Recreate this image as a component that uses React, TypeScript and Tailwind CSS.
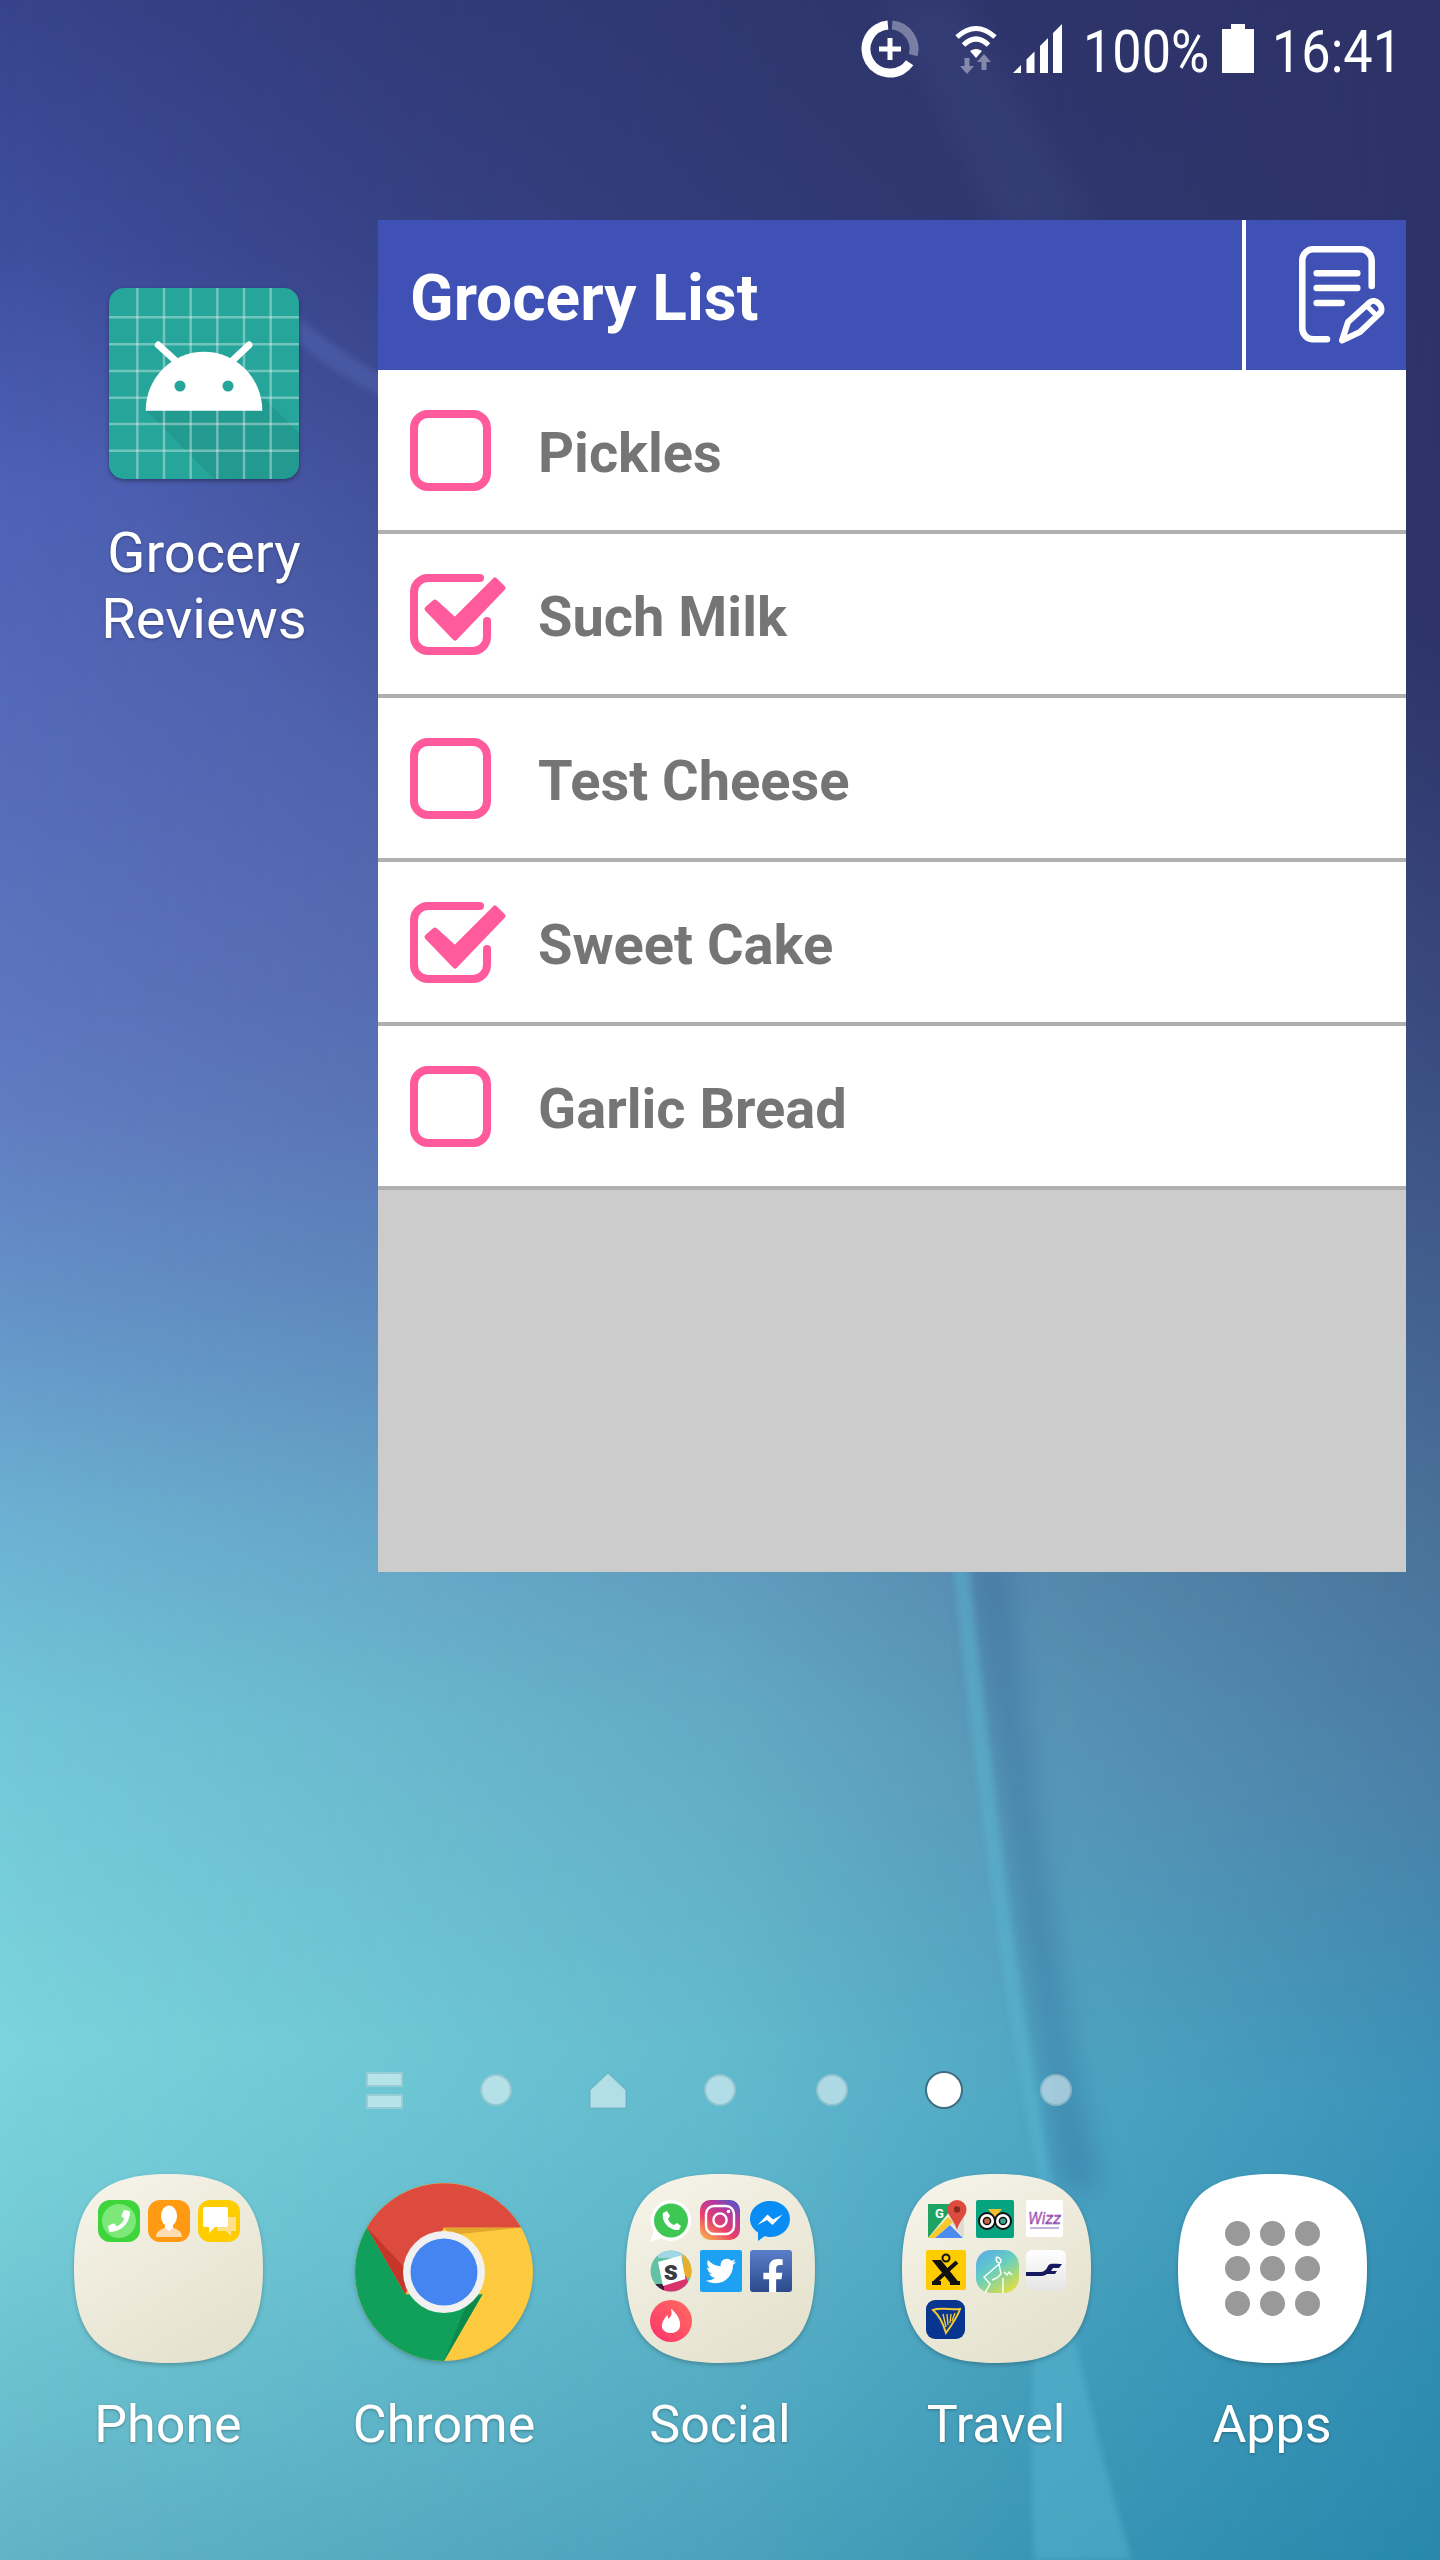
import type { ReactNode } from "react";
import { FaFacebookF, FaPhoneAlt, FaTwitter } from "react-icons/fa";
import { SiTinder } from "react-icons/si";

const groceries = [
  { name: "Pickles", checked: false },
  { name: "Such Milk", checked: true },
  { name: "Test Cheese", checked: false },
  { name: "Sweet Cake", checked: true },
  { name: "Garlic Bread", checked: false },
];

function Wallpaper() {
  return (
    <svg className="absolute inset-0 w-[1440px] h-[2560px]" viewBox="0 0 1440 2560">
      <defs>
        <linearGradient id="wallLeft" x1="0" y1="0" x2="0" y2="1">
          <stop offset="0" stopColor="#37448c" />
          <stop offset="0.1" stopColor="#3f4fa0" />
          <stop offset="0.19" stopColor="#4e61b6" />
          <stop offset="0.39" stopColor="#5d75be" />
          <stop offset="0.44" stopColor="#617ec2" />
          <stop offset="0.51" stopColor="#6593c8" />
          <stop offset="0.59" stopColor="#6cb0d2" />
          <stop offset="0.67" stopColor="#72c6d8" />
          <stop offset="0.8" stopColor="#7bd5dc" />
          <stop offset="0.88" stopColor="#74cbd6" />
          <stop offset="1" stopColor="#62b3c6" />
        </linearGradient>
        <linearGradient id="wallRight" x1="0" y1="0" x2="0" y2="1">
          <stop offset="0" stopColor="#2c3165" />
          <stop offset="0.25" stopColor="#2e3468" />
          <stop offset="0.4" stopColor="#394a80" />
          <stop offset="0.6" stopColor="#4a7299" />
          <stop offset="0.7" stopColor="#4a80a8" />
          <stop offset="0.82" stopColor="#3a92b8" />
          <stop offset="1" stopColor="#2788ac" />
        </linearGradient>
        <linearGradient id="wallFade" gradientUnits="userSpaceOnUse" x1="0" y1="0" x2="1440" y2="0">
          <stop offset="0" stopColor="#000" />
          <stop offset="0.25" stopColor="#2e2e2e" />
          <stop offset="0.5" stopColor="#616161" />
          <stop offset="0.75" stopColor="#b8b8b8" />
          <stop offset="1" stopColor="#fff" />
        </linearGradient>
        <radialGradient id="wallTop" gradientUnits="userSpaceOnUse" cx="1000" cy="0" r="1000">
          <stop offset="0" stopColor="#2d3367" stopOpacity="0.7" />
          <stop offset="0.6" stopColor="#2d3367" stopOpacity="0.35" />
          <stop offset="1" stopColor="#2d3367" stopOpacity="0" />
        </radialGradient>
        <mask id="wallMask">
          <rect width="1440" height="2560" fill="url(#wallFade)" />
        </mask>
        <filter id="soft" x="-30%" y="-30%" width="160%" height="160%">
          <feGaussianBlur stdDeviation="14" />
        </filter>
        <filter id="softer" x="-30%" y="-30%" width="160%" height="160%">
          <feGaussianBlur stdDeviation="3" />
        </filter>
      </defs>
      <rect width="1440" height="2560" fill="url(#wallLeft)" />
      <rect width="1440" height="2560" fill="url(#wallRight)" mask="url(#wallMask)" />
      <rect width="1440" height="1000" fill="url(#wallTop)" />
      <path d="M968 1560 C1000 1780 1030 2000 1060 2190 L1100 2190 C1060 2000 1030 1780 1010 1560 Z" fill="#2f5f96" opacity="0.35" filter="url(#soft)" />
      <path d="M952 1560 C970 1720 990 1900 1015 2050 L1040 2190 C1032 2320 1030 2460 1034 2560 L1132 2560 C1105 2470 1090 2410 1078 2350 C1060 2240 1045 2140 1030 2050 C1006 1900 986 1720 968 1560 Z" fill="#5cbad6" opacity="0.45" filter="url(#softer)" />
      <path d="M290 335 C325 368 360 386 400 406 L400 384 C360 364 325 340 290 310 Z" fill="#6a82d4" opacity="0.24" filter="url(#softer)" />
      <path d="M880 0 L1000 230 L1100 230 L960 0 Z" fill="#5a6aa8" opacity="0.12" filter="url(#soft)" />
    </svg>
  );
}

function StatusBar() {
  return (
    <div className="relative flex h-[100px] shrink-0 items-start justify-end pt-[19px] pr-[46px] text-white" style={{ fontFamily: "Roboto, sans-serif" }}>
      <svg width="60" height="60" viewBox="0 0 60 60">
        <path d="M49.66 43.77 A24 24 0 1 1 27.9 6.1" fill="none" stroke="#fff" strokeWidth="9" />
        <path d="M32.1 6.1 A24 24 0 0 1 53.18 36.2" fill="none" stroke="#fff" strokeOpacity="0.35" strokeWidth="9" />
        <path d="M30 19 V41 M19 30 H41" stroke="#fff" strokeWidth="5" />
      </svg>
      <svg className="ml-[34px] mt-[5px]" width="44" height="50" viewBox="0 0 44 50">
        <path d="M3 13 Q22 -4 41 13" fill="none" stroke="#fff" strokeWidth="5" />
        <path d="M9.5 21 Q22 9 34.5 21" fill="none" stroke="#fff" strokeWidth="5" />
        <path d="M16 27 Q22 23 28 27 L22 34 Z" fill="#fff" />
        <path d="M10.5 34 H15.5 V42 H20 L13 50 L6 42 H10.5 Z M27.5 46 H32.5 V38 H37 L30 30 L23 38 H27.5 Z" fill="#fff" fillOpacity="0.4" />
      </svg>
      <svg className="ml-[15px] mt-[5px]" width="49" height="49" viewBox="0 0 49 49">
        <path d="M0 49 L8 41 V49 Z M13.5 49 V35.5 L21.5 27.5 V49 Z M27 49 V22 L35 14 V49 Z M40 49 V9 L49 0 V49 Z" fill="#fff" />
      </svg>
      <div className="ml-[21px] mt-[3px] w-[125px] whitespace-nowrap text-[60px] leading-[60px] font-normal origin-left scale-x-[0.87]">100%</div>
      <svg className="ml-[14px] mt-[5px]" width="32" height="49" viewBox="0 0 32 49">
        <path d="M9 0 H23 V5 H32 V49 H0 V5 H9 Z" fill="#fff" />
      </svg>
      <div className="ml-[18px] mt-[3px] w-[122px] whitespace-nowrap text-[60px] leading-[60px] font-normal origin-left scale-x-[0.87]">16:41</div>
    </div>
  );
}

function AndroidIcon() {
  const vertical = [28.3, 55, 81.7, 108.3, 135, 161.7];
  const horizontal = [29.3, 56.3, 83, 109.7, 136, 162.7];
  return (
    <svg className="drop-shadow-[0_2px_2px_rgba(0,0,0,0.35)]" width="190" height="191" viewBox="0 0 190 191">
      <defs>
        <clipPath id="androidClip">
          <rect width="190" height="191" rx="15" />
        </clipPath>
      </defs>
      <g clipPath="url(#androidClip)">
        <rect width="190" height="191" fill="#26a69a" />
        <path d="M36.7 122 L105 191 H190 V145 L153 108 Z" fill="#000" fillOpacity="0.07" />
        {vertical.map((x) => (
          <line key={x} x1={x} x2={x} y1="0" y2="191" stroke="#fff" strokeOpacity="0.35" strokeWidth="2.5" />
        ))}
        {horizontal.map((y) => (
          <line key={y} y1={y} y2={y} x1="0" x2="190" stroke="#fff" strokeOpacity="0.35" strokeWidth="2.5" />
        ))}
      </g>
      <path d="M49.3 57 L68 74 M140 57 L122 74" stroke="#fff" strokeWidth="7" strokeLinecap="round" />
      <path d="M36.7 122.7 A58.3 59 0 0 1 153.3 122.7 Z" fill="#fff" />
      <circle cx="71" cy="98" r="5.5" fill="#26a69a" />
      <circle cx="119" cy="98" r="5.5" fill="#26a69a" />
    </svg>
  );
}

function CheckBox({ checked }: { checked: boolean }) {
  if (!checked) {
    return <div className="h-[81px] w-[81px] shrink-0 rounded-[18px] border-[8px] border-[#ff5a9b]" />;
  }
  return (
    <svg className="shrink-0 overflow-visible" width="81" height="81" viewBox="0 0 81 81">
      <path d="M70 4 H18 A14 14 0 0 0 4 18 V63 A14 14 0 0 0 18 77 H63 A14 14 0 0 0 77 63 V47" fill="none" stroke="#ff5a9b" strokeWidth="8" strokeLinecap="round" />
      <path d="M17 35 L25 28 L45 46 L85 6 L93 14 L45 64 Z" fill="#ff5a9b" stroke="#ff5a9b" strokeWidth="5" strokeLinejoin="round" />
    </svg>
  );
}

function NoteIcon() {
  return (
    <svg width="92" height="100" viewBox="0 0 92 100" fill="none" stroke="#fff" strokeWidth="6.5" strokeLinecap="round" strokeLinejoin="round">
      <path d="M75.7 40 V15 A11.5 11.5 0 0 0 64 3.3 H17 A11 11 0 0 0 6.3 14 V82 A11 11 0 0 0 17.3 93.3 H31" />
      <path d="M20.7 27.3 H61.3 M20.7 42 H61.3 M20.7 57 H45.7" />
      <path d="M46 94.5 L52 76 L74 56 C79 52 88 60 85 66 L64 86 Z" strokeWidth="6" />
      <path d="M71 60 L81 70" strokeWidth="5" />
    </svg>
  );
}

function GroceryWidget() {
  return (
    <div className="flex h-[1352px] w-[1028px] flex-col bg-[#cccccc]" style={{ fontFamily: "Roboto, sans-serif" }}>
      <div className="flex h-[150px] shrink-0 bg-[#3f51b5]">
        <div className="flex w-[864px] items-center pl-[32px] pt-[7px] text-[64px] font-bold text-white">Grocery List</div>
        <div className="flex flex-1 items-center justify-center border-l-4 border-white pl-[31px] pt-[2px]">
          <NoteIcon />
        </div>
      </div>
      {groceries.map((item) => (
        <div key={item.name} className="flex h-[164px] shrink-0 items-center gap-[47px] border-b-4 border-[#b0b0b0] bg-white pl-[32px]">
          <CheckBox checked={item.checked} />
          <span className="pt-[6px] text-[56px] font-bold text-[#757575]">{item.name}</span>
        </div>
      ))}
    </div>
  );
}

function PageDots() {
  const dot = "h-[32px] w-[32px] rounded-full border-2 border-[#4d8a9c]/30 bg-white/50";
  return (
    <div className="relative mt-auto flex h-[36px] items-center justify-center">
      <div className="flex w-[112px] justify-center">
        <div className="flex flex-col gap-[7px]">
          <div className="h-[15px] w-[37px] border-2 border-[#4d9aa8]/30 bg-white/50" />
          <div className="h-[15px] w-[37px] border-2 border-[#4d9aa8]/30 bg-white/50" />
        </div>
      </div>
      <div className="flex w-[112px] justify-center">
        <div className={dot} />
      </div>
      <div className="flex w-[112px] justify-center">
        <svg width="38" height="37" viewBox="0 0 38 37">
          <path d="M19 1 L37 18 V36 H1 V18 Z" fill="#fff" fillOpacity="0.5" stroke="#4d9aa8" strokeOpacity="0.35" strokeWidth="1.5" />
        </svg>
      </div>
      <div className="flex w-[112px] justify-center">
        <div className={dot} />
      </div>
      <div className="flex w-[112px] justify-center">
        <div className={dot} />
      </div>
      <div className="flex w-[112px] justify-center">
        <div className="h-[38px] w-[38px] rounded-full border-2 border-[#3f6f82] bg-white" />
      </div>
      <div className="flex w-[112px] justify-center">
        <div className={dot} />
      </div>
    </div>
  );
}

function Squircle({ fill }: { fill: string }) {
  return (
    <svg className="absolute inset-0 drop-shadow-[0_2px_2px_rgba(0,0,0,0.22)]" width="189" height="189" viewBox="0 0 189 189">
      <defs>
        <linearGradient id="folderFill" x1="0" y1="0" x2="0.6" y2="1">
          <stop offset="0" stopColor="#f7f5ea" />
          <stop offset="1" stopColor="#e5e2cf" />
        </linearGradient>
      </defs>
      <path d="M94.5 0 C163 0 189 26 189 94.5 C189 163 163 189 94.5 189 C26 189 0 163 0 94.5 C0 26 26 0 94.5 0 Z" fill={fill} />
    </svg>
  );
}

function Folder({ children }: { children: ReactNode }) {
  return (
    <div className="relative h-[189px] w-[189px]">
      <Squircle fill="url(#folderFill)" />
      <div className="absolute inset-0 grid grid-cols-[repeat(3,42px)] auto-rows-[42px] content-start gap-[8px] pt-[26px] pl-[24px]">{children}</div>
    </div>
  );
}

function Mini({ className, children }: { className: string; children?: ReactNode }) {
  return <div className={`flex h-[42px] w-[42px] items-center justify-center overflow-hidden text-white ${className}`}>{children}</div>;
}

function WhatsappMini() {
  return (
    <svg width="42" height="42" viewBox="0 0 42 42" className="overflow-visible">
      <path d="M21 0 A20.5 20.5 0 1 1 11 38.5 L0 42 L3.5 31 A20.5 20.5 0 0 1 21 0 Z" fill="#fff" />
      <circle cx="21" cy="20.5" r="17" fill="#3fc754" />
      <path d="M13 13 L17 11 L20 16 L18 19 C19 22 21 24 24 25 L27 23 L31 26 L29 30 C20 31 11 22 13 13 Z" fill="#fff" />
    </svg>
  );
}

function InstagramMini() {
  return (
    <svg width="40" height="40" viewBox="0 0 40 40">
      <defs>
        <linearGradient id="instaFill" x1="0.1" y1="1" x2="0.8" y2="0">
          <stop offset="0" stopColor="#fdb44b" />
          <stop offset="0.4" stopColor="#ea3f6a" />
          <stop offset="0.75" stopColor="#b5399e" />
          <stop offset="1" stopColor="#5b53c6" />
        </linearGradient>
      </defs>
      <rect width="40" height="40" rx="10" fill="url(#instaFill)" />
      <rect x="6" y="6" width="28" height="28" rx="8" fill="none" stroke="#fff" strokeWidth="2.4" />
      <circle cx="20" cy="20" r="6.6" fill="none" stroke="#fff" strokeWidth="2.4" />
      <circle cx="28.5" cy="11.5" r="1.8" fill="#fff" />
    </svg>
  );
}

function MessengerMini() {
  return (
    <svg width="40" height="42" viewBox="0 0 40 42">
      <path d="M20 1 C31 1 40 8.5 40 19 C40 29.5 31 37 20 37 C18 37 16 36.8 14.5 36.2 L8 41 V32.5 C3 29 0 24.5 0 19 C0 8.5 9 1 20 1 Z" fill="#0a8cf5" />
      <path d="M7.5 25 L17.5 14.5 L23 19.5 L32.5 14.5 L22.5 25 L17 20 Z" fill="#fff" />
    </svg>
  );
}

function SlackMini() {
  return (
    <svg width="42" height="42" viewBox="0 0 42 42" className="overflow-visible">
      <defs>
        <clipPath id="slackClip">
          <circle cx="21" cy="21" r="20.5" />
        </clipPath>
      </defs>
      <g clipPath="url(#slackClip)">
        <rect width="42" height="42" fill="#64c2a4" />
        <path d="M8 0 H42 V8 H8 Z" fill="#9fd8e4" />
        <path d="M32 0 H42 V28 H34 Z" fill="#e9ae2c" />
        <path d="M8 36 L36 26 L42 42 H8 Z" fill="#d9336c" />
        <path d="M0 34 L14 34 L14 42 L0 42 Z" fill="#3d1f3e" />
        <path d="M8 12 L31 5.5 L35.5 29 L13 36 Z" fill="#fff" />
      </g>
      <text x="21" y="30" textAnchor="middle" fontFamily="Roboto, sans-serif" fontWeight="900" fontSize="27" fill="#3a3a42">s</text>
    </svg>
  );
}

function TinderMini() {
  return (
    <Mini className="rounded-full bg-gradient-to-tr from-[#fd2d6c] to-[#ff6b5f]">
      <SiTinder size={24} />
    </Mini>
  );
}

function MapsMini() {
  return (
    <svg width="42" height="42" viewBox="0 0 42 42" className="overflow-visible">
      <path d="M2 4 H30 L2 38 Z" fill="#1ea362" />
      <path d="M30 4 H38 V38 L23 21 Z" fill="#e0dcd2" />
      <path d="M2 38 L22 17 L27 22 L9 38 Z" fill="#f7c92d" />
      <path d="M9 38 L24 25 L37 38 Z" fill="#4c8bf0" />
      <text x="9" y="18" fontFamily="Roboto, sans-serif" fontWeight="700" fontSize="13" fill="#fff">G</text>
      <path d="M31 0 A9.5 9.5 0 0 1 40.5 9.5 C40.5 16 33 21 31 30 C29 21 21.5 16 21.5 9.5 A9.5 9.5 0 0 1 31 0 Z" fill="#dd4b3e" />
      <circle cx="31" cy="9.5" r="3.2" fill="#8a2a22" />
    </svg>
  );
}

function TripadvisorMini() {
  return (
    <svg width="38" height="38" viewBox="0 0 38 38">
      <rect width="38" height="38" rx="2" fill="#05a37f" />
      <path d="M12 9 H26 L19 18 Z" fill="#f5bd30" />
      <circle cx="11" cy="21" r="8" fill="#fff" stroke="#111" strokeWidth="2" />
      <circle cx="27" cy="21" r="8" fill="#fff" stroke="#111" strokeWidth="2" />
      <circle cx="11" cy="21" r="3.6" fill="#c96545" stroke="#111" strokeWidth="1.5" />
      <circle cx="27" cy="21" r="3.6" fill="#35a98f" stroke="#111" strokeWidth="1.5" />
    </svg>
  );
}

function WizzMini() {
  return (
    <svg width="37" height="37" viewBox="0 0 37 37">
      <rect width="37" height="37" rx="2" fill="#fff" />
      <text x="18.5" y="24" textAnchor="middle" fontFamily="Roboto, sans-serif" fontStyle="italic" fontWeight="400" fontSize="16" fill="#d66bc0" stroke="#5f3fa8" strokeWidth="0.3">Wizz</text>
      <path d="M4 28 H33" stroke="#5f3fa8" strokeWidth="0.8" />
    </svg>
  );
}

function TaxiMini() {
  return (
    <svg width="40" height="40" viewBox="0 0 40 40">
      <rect width="40" height="40" rx="2" fill="#ffcc00" />
      <path d="M9 32 L31 12 M10 12 H14 L30 32 H26 Z M6 33 H15 M24 33 H34" stroke="#111" strokeWidth="4" fill="#111" />
      <circle cx="20" cy="8" r="3.5" fill="#ffcc00" stroke="#111" strokeWidth="2" />
    </svg>
  );
}

function FitnessMini() {
  return (
    <svg width="43" height="43" viewBox="0 0 43 43" className="overflow-visible">
      <defs>
        <linearGradient id="fitFill" x1="0" y1="0" x2="0.7" y2="1">
          <stop offset="0" stopColor="#57a8ee" />
          <stop offset="0.5" stopColor="#66cfc0" />
          <stop offset="1" stopColor="#d8de4a" />
        </linearGradient>
      </defs>
      <rect width="43" height="43" rx="15" fill="url(#fitFill)" />
      <path d="M21 7 C19 10 21 13 24 13 C26 11 25 8 21 7 Z M23 14 L14 22 L8 27 L14 34 L9 43 M23 14 L25 24 L21 28 L16 30 M28 22 L31 25 L33 22 L36 25 M27 28 V43" fill="none" stroke="#fff" strokeWidth="1.4" />
    </svg>
  );
}

function FinnairMini() {
  return (
    <svg width="40" height="40" viewBox="0 0 40 40">
      <defs>
        <linearGradient id="finFill" x1="0" y1="0" x2="0" y2="1">
          <stop offset="0" stopColor="#ffffff" />
          <stop offset="1" stopColor="#e5e5e5" />
        </linearGradient>
      </defs>
      <rect width="40" height="40" rx="6" fill="url(#finFill)" />
      <path d="M0 22 H14 C18 22 20 20 22 16 C24 13 26 14 36 14 L33 18 H27 L25 21 H31 L29 24 H21 C18 26 16 26 14 26 H0 Z" fill="#17195f" />
    </svg>
  );
}

function RyanairMini() {
  return (
    <svg width="39" height="39" viewBox="0 0 39 39">
      <rect width="39" height="39" rx="9" fill="#073590" />
      <path d="M7 10 C14 7 26 10 34 9 C32 16 25 26 20 33 C18 26 15 17 7 10 Z" fill="none" stroke="#f1c933" strokeWidth="2" />
      <path d="M17 14 L20 27 M21 14 L22 25 M25 14 L24 23 M29 13 L26 21" stroke="#f1c933" strokeWidth="1.4" />
    </svg>
  );
}

function ChromeIcon() {
  return (
    <svg className="mt-[7px] drop-shadow-[0_2px_2px_rgba(0,0,0,0.2)]" width="178" height="178" viewBox="0 0 178 178">
      <circle cx="89" cy="89" r="89" fill="#fdca3f" />
      <path d="M89 44.5 H166 L96 52 Z" fill="#e2a72c" />
      <path d="M12 44.5 A89 89 0 0 0 89 178 L127.5 111.25 L50.5 111.25 Z" fill="#11a05c" />
      <path d="M127.5 111.25 L89 178 L112 120 Z" fill="#0c8a4d" />
      <path d="M12 44.5 A89 89 0 0 1 166 44.5 L89 44.5 L50.5 111.25 Z" fill="#dc4b3e" />
      <path d="M12 44.5 L50.5 111.25 L50 85 Z" fill="#c5352a" />
      <circle cx="89" cy="89" r="41" fill="#f1f1f1" />
      <circle cx="89" cy="89" r="33.5" fill="#4585f1" />
    </svg>
  );
}

function AppsIcon() {
  const dots = [1, 2, 3, 4, 5, 6, 7, 8, 9];
  return (
    <div className="relative flex h-[189px] w-[189px] items-center justify-center">
      <Squircle fill="#ffffff" />
      <div className="relative grid grid-cols-[repeat(3,25px)] gap-[10px]">
        {dots.map((d) => (
          <div key={d} className="h-[25px] w-[25px] rounded-full bg-[#999999]" />
        ))}
      </div>
    </div>
  );
}

function DockItem({ label, children }: { label: string; children: ReactNode }) {
  return (
    <div className="flex flex-col items-center">
      <div className="flex h-[189px] items-center justify-center">{children}</div>
      <span className="mt-[32px] text-[52px] leading-[60px] text-white [text-shadow:0_1px_3px_rgba(0,0,0,0.3)]">{label}</span>
    </div>
  );
}

export default function App() {
  return (
    <div className="relative flex h-[2560px] w-[1440px] flex-col overflow-hidden" style={{ fontFamily: "Roboto, sans-serif" }}>
      <Wallpaper />
      <StatusBar />

      <div className="relative mt-[120px] flex">
        <div className="flex w-[378px] flex-col items-center pt-[68px] pl-[30px]">
          <AndroidIcon />
          <span className="mt-[41px] text-center text-[56px] leading-[66px] text-white [text-shadow:0_1px_3px_rgba(0,0,0,0.3)]">
            Grocery
            <br />
            Reviews
          </span>
        </div>
        <GroceryWidget />
      </div>

      <PageDots />

      <div className="relative mt-[66px] grid grid-cols-5 px-[30px] pb-[105px]">
        <DockItem label="Phone">
          <Folder>
            <Mini className="rounded-[12px] bg-[#3ed43c]">
              <div className="flex h-[34px] w-[34px] items-center justify-center rounded-full bg-[#7ce87a]">
                <FaPhoneAlt size={22} className="-scale-x-100" />
              </div>
            </Mini>
            <Mini className="rounded-[12px] bg-[#ff9a12]">
              <svg width="30" height="32" viewBox="0 0 30 32">
                <path d="M2 32 C2 25 9 24 12 22 H18 C21 24 28 25 28 32 Z" fill="#ffdcb2" />
                <ellipse cx="15" cy="11" rx="8" ry="10.5" fill="#fff" />
                <path d="M11 18 H19 V23 L15 26 L11 23 Z" fill="#fff" />
              </svg>
            </Mini>
            <Mini className="rounded-[12px] bg-[#ffcc00]">
              <svg width="34" height="32" viewBox="0 0 34 32">
                <path d="M15 12 H34 V26 H29 V31 L24 26 H15 Z" fill="#ffe08a" />
                <path d="M3 2 H24 Q26 2 26 4 V20 Q26 22 24 22 H13 L7 28 V22 H3 Q1 22 1 20 V4 Q1 2 3 2 Z" fill="#fff" />
              </svg>
            </Mini>
          </Folder>
        </DockItem>

        <DockItem label="Chrome">
          <ChromeIcon />
        </DockItem>

        <DockItem label="Social">
          <Folder>
            <WhatsappMini />
            <InstagramMini />
            <MessengerMini />
            <SlackMini />
            <Mini className="rounded-[2px] bg-[#1da1f2]">
              <FaTwitter size={30} />
            </Mini>
            <Mini className="rounded-[3px] bg-gradient-to-b from-[#5a7fc9] to-[#2c4a8c] items-end justify-end pr-[1px]">
              <FaFacebookF size={36} className="mb-[-3px]" />
            </Mini>
            <TinderMini />
          </Folder>
        </DockItem>

        <DockItem label="Travel">
          <Folder>
            <MapsMini />
            <TripadvisorMini />
            <WizzMini />
            <TaxiMini />
            <FitnessMini />
            <FinnairMini />
            <RyanairMini />
          </Folder>
        </DockItem>

        <DockItem label="Apps">
          <AppsIcon />
        </DockItem>
      </div>
    </div>
  );
}
